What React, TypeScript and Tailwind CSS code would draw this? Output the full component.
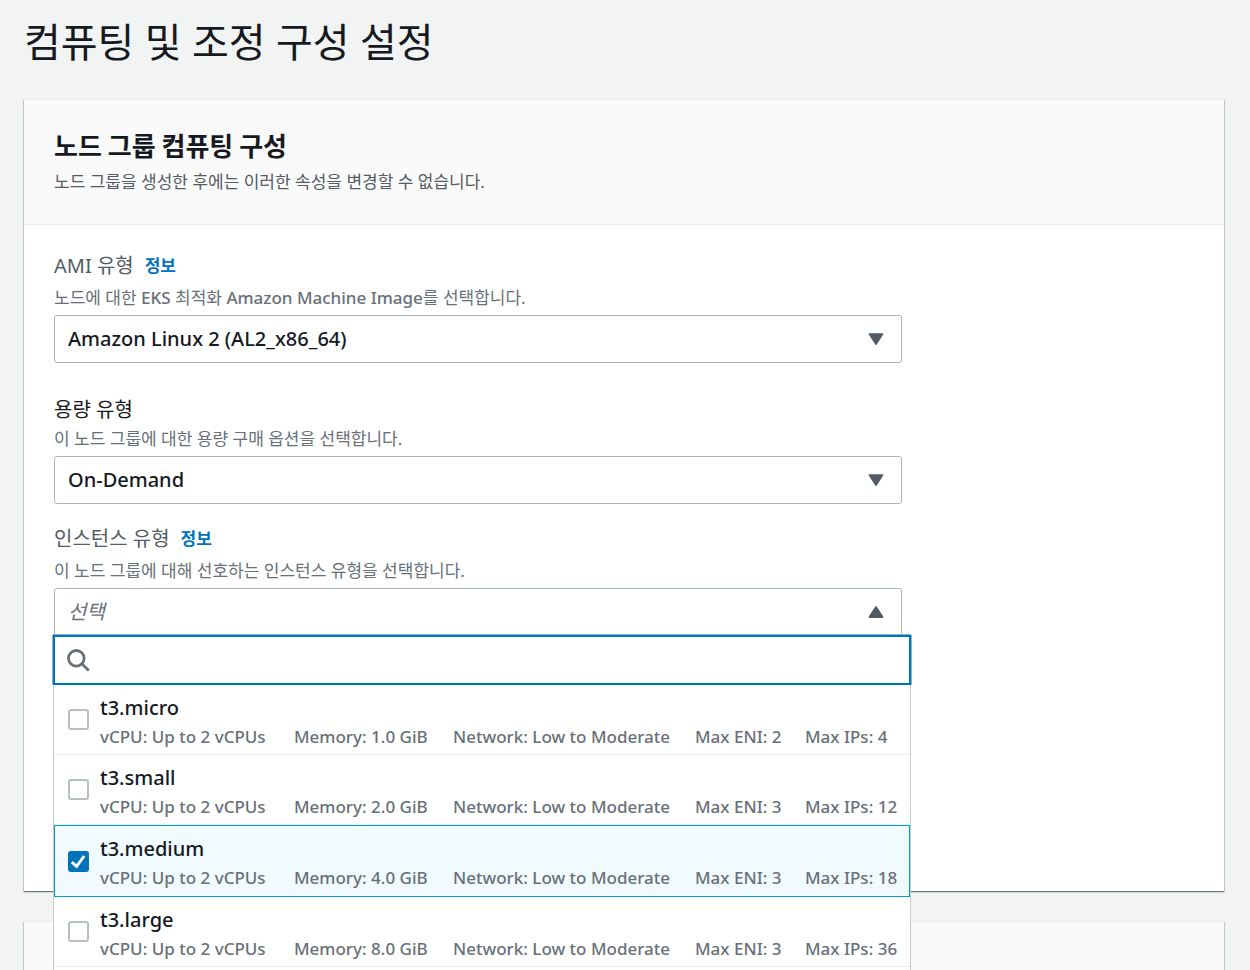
import { useState } from 'react';
import type { ReactNode } from 'react';

type Instance = {
  name: string;
  memory: string;
  eni: number;
  ips: number;
};

const instances: Instance[] = [
  { name: 't3.micro', memory: '1.0 GiB', eni: 2, ips: 4 },
  { name: 't3.small', memory: '2.0 GiB', eni: 3, ips: 12 },
  { name: 't3.medium', memory: '4.0 GiB', eni: 3, ips: 18 },
  { name: 't3.large', memory: '8.0 GiB', eni: 3, ips: 36 },
];

const cardClass =
  'border-t border-[#eaeded] bg-white shadow-[0_1px_1px_0_rgba(0,28,36,0.4),1px_1px_1px_0_rgba(0,28,36,0.15),-1px_1px_1px_0_rgba(0,28,36,0.15)]';

function Caret({ up = false }: { up?: boolean }) {
  return (
    <svg viewBox="0 0 16 13" className="pointer-events-none h-[13px] w-4" aria-hidden="true">
      <path
        d={up ? 'M1.5 11h13L8 1.1z' : 'M1.5 1.1h13L8 11z'}
        fill="#545b64"
        stroke="#545b64"
        strokeWidth="1.8"
        strokeLinejoin="round"
      />
    </svg>
  );
}

function InfoLink() {
  return (
    <a href="#info" className="text-[17px] font-bold text-[#0073bb]">
      정보
    </a>
  );
}

function SelectBox({ id, value }: { id: string; value: string }) {
  return (
    <div className="grid items-center">
      <select
        id={id}
        defaultValue={value}
        className="col-start-1 row-start-1 h-12 w-full appearance-none rounded-[3px] border border-[#aab7b8] bg-white px-[13px] text-[20px] font-medium text-[#16191f]"
      >
        <option>{value}</option>
      </select>
      <div className="pointer-events-none col-start-1 row-start-1 mr-[18px] justify-self-end">
        <Caret />
      </div>
    </div>
  );
}

function Hint({ children }: { children: ReactNode }) {
  return <p className="text-[17px] leading-6 text-[#687078]">{children}</p>;
}

function InstanceOption({
  item,
  selected,
  onToggle,
}: {
  item: Instance;
  selected: boolean;
  onToggle: () => void;
}) {
  return (
    <li>
      <label
        className={
          selected
            ? 'flex h-[72px] items-center gap-[11px] border border-[#00a1c9] bg-[#f1faff] px-[13px]'
            : 'flex h-[70px] items-center gap-[11px] border-b border-[#eaeded] px-[14px]'
        }
      >
        <span className="grid shrink-0">
          <input
            type="checkbox"
            checked={selected}
            onChange={onToggle}
            className="col-start-1 row-start-1 size-[21px] appearance-none rounded-[3px] border-2 border-[#b4c0c1] bg-white checked:border-[#0073bb] checked:bg-[#0073bb]"
          />
          {selected && (
            <svg viewBox="0 0 21 21" className="pointer-events-none col-start-1 row-start-1 size-[21px]" aria-hidden="true">
              <path d="M3.8 11.2l4.8 4.2L16.2 5" fill="none" stroke="#fff" strokeWidth="2.9" />
            </svg>
          )}
        </span>
        <span className="flex flex-col pt-1">
          <span className="text-[20px] leading-[30px] font-medium text-[#16191f]">{item.name}</span>
          <span className="grid grid-cols-[170px_135px_218px_86px_auto] gap-x-6 text-[17px] leading-7 font-medium whitespace-nowrap text-[#687078]">
            <span>vCPU: Up to 2 vCPUs</span>
            <span>Memory: {item.memory}</span>
            <span>Network: Low to Moderate</span>
            <span>Max ENI: {item.eni}</span>
            <span>Max IPs: {item.ips}</span>
          </span>
        </span>
      </label>
    </li>
  );
}

function InstancePicker() {
  const [selected, setSelected] = useState<string[]>(['t3.medium']);
  const [open, setOpen] = useState(true);

  const toggle = (name: string) =>
    setSelected((current) =>
      current.includes(name) ? current.filter((n) => n !== name) : [...current, name],
    );

  return (
    <div className="relative">
      <button
        id="instance-type"
        type="button"
        aria-expanded={open}
        onClick={() => setOpen(!open)}
        className="flex h-12 w-full items-center justify-between rounded-[3px] border border-[#aab7b8] bg-white pr-[17px] pl-[13px] text-[20px] text-[#687078]"
      >
        <span className="italic">선택</span>
        <Caret up={open} />
      </button>
      {open && (
        <div className="absolute top-[47px] left-0 z-10 w-[856px] bg-white pb-8 shadow-[1px_0_0_0_#c6cccd,-1px_0_0_0_#c6cccd]">
          <div className="-mx-px flex h-[50px] items-center gap-3 border-2 border-[#0073bb] bg-white px-[11px] shadow-[0_-1px_0_0_#80b9dd,1px_0_0_0_#80b9dd,-1px_0_0_0_#80b9dd]">
            <svg viewBox="0 0 24 24" className="size-6" fill="none" stroke="#687078" strokeWidth="2.8" aria-hidden="true">
              <circle cx="10.3" cy="10.3" r="7.8" />
              <path d="M15.8 15.8l7 6.8" />
            </svg>
            <input type="text" aria-label="인스턴스 유형 검색" className="h-full min-w-0 flex-1 text-[20px] outline-none" />
          </div>
          <ul>
            {instances.map((item) => (
              <InstanceOption
                key={item.name}
                item={item}
                selected={selected.includes(item.name)}
                onToggle={() => toggle(item.name)}
              />
            ))}
          </ul>
        </div>
      )}
    </div>
  );
}

export default function App() {
  return (
    <main className="h-screen overflow-hidden bg-[#f2f3f3] px-6 pt-3 pr-[26px] font-['Noto_Sans','Noto_Sans_CJK_KR',sans-serif] text-[#16191f]">
      <h1 className="text-[40px] leading-[60px]">컴퓨팅 및 조정 구성 설정</h1>

      <section className={`${cardClass} mt-[27px]`}>
        <header className="border-b border-[#eaeded] bg-[#fafafa] px-[30px] pt-[26px] pb-[30px]">
          <h2 className="font-['Noto_Sans_CJK_KR',sans-serif] text-[26px] leading-[38px] font-bold">
            노드 그룹 컴퓨팅 구성
          </h2>
          <p className="pt-[6px] text-[17px] leading-6 text-[#545b64]">
            노드 그룹을 생성한 후에는 이러한 속성을 변경할 수 없습니다.
          </p>
        </header>

        <div className="px-[30px] pt-[26px] pb-[255px]">
          <div className="max-w-[848px]">
            <div className="flex items-center gap-[11px] text-[20px] leading-[30px] text-[#545b64]">
              <label htmlFor="ami-type">AMI 유형</label>
              <InfoLink />
            </div>
            <div className="py-[5px]">
              <Hint>
                노드에 대한 <span className="font-medium">EKS</span> 최적화{' '}
                <span className="font-medium">Amazon Machine Image</span>를 선택합니다.
              </Hint>
            </div>
            <SelectBox id="ami-type" value="Amazon Linux 2 (AL2_x86_64)" />

            <div className="pt-[32px] text-[20px] leading-[30px]">
              <label htmlFor="capacity-type">용량 유형</label>
            </div>
            <div className="pt-[2px] pb-[5px]">
              <Hint>이 노드 그룹에 대한 용량 구매 옵션을 선택합니다.</Hint>
            </div>
            <SelectBox id="capacity-type" value="On-Demand" />

            <div className="flex items-center gap-[11px] pt-[20px] text-[20px] leading-[30px] text-[#545b64]">
              <label htmlFor="instance-type">인스턴스 유형</label>
              <InfoLink />
            </div>
            <div className="py-[5px]">
              <Hint>이 노드 그룹에 대해 선호하는 인스턴스 유형을 선택합니다.</Hint>
            </div>
            <InstancePicker />
          </div>
        </div>
      </section>

      <section className={`${cardClass} mt-[30px]`}>
        <div className="h-32 bg-[#fafafa]" />
      </section>
    </main>
  );
}
